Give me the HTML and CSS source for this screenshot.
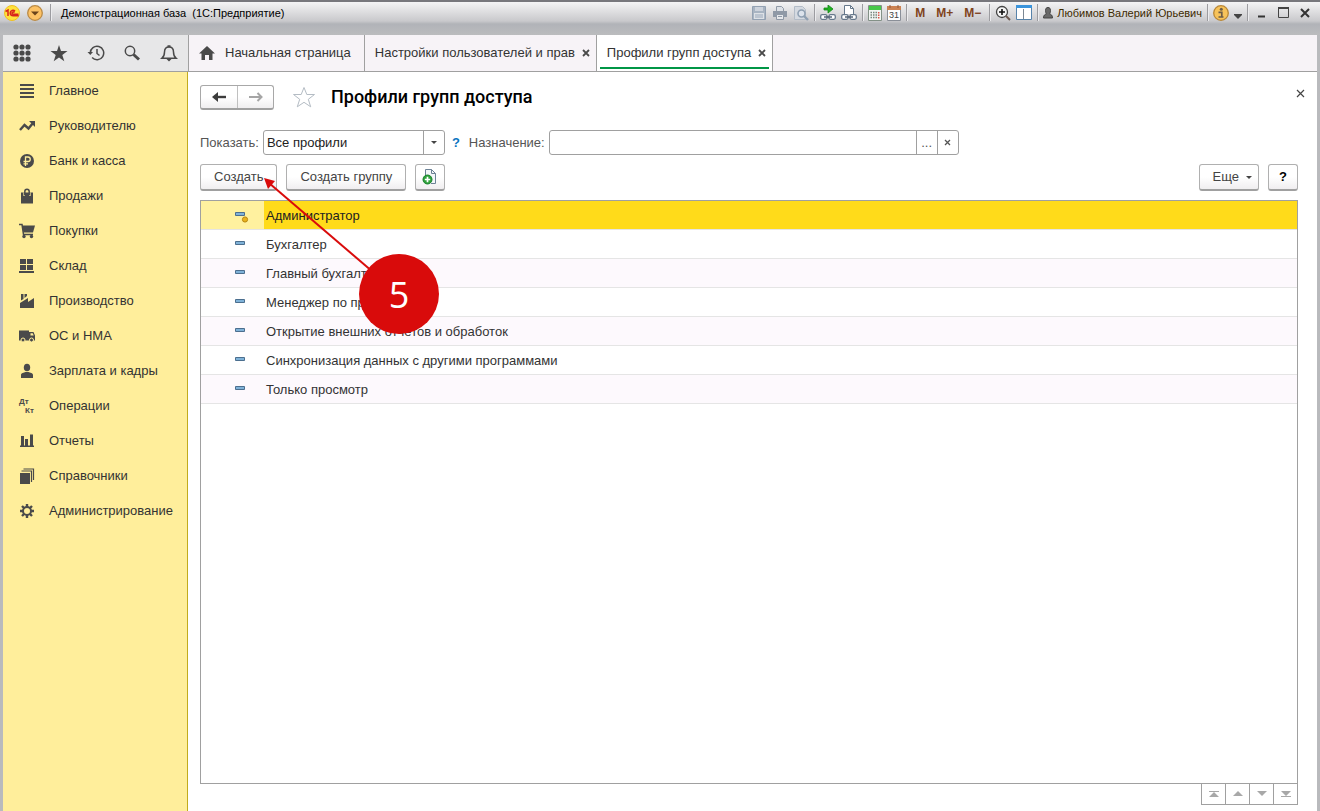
FILE: index.html
```html
<!DOCTYPE html>
<html lang="ru">
<head>
<meta charset="utf-8">
<title>Демонстрационная база (1С:Предприятие)</title>
<link rel="stylesheet" href="styles.css">
</head>
<body>
<div class="window">
  <header class="titlebar">
    <button class="tb-btn logo" aria-label="1С">
      <svg width="16" height="16" viewBox="0 0 16 16"><circle cx="8" cy="8" r="7.500" fill="#ffe23c" stroke="#f0c020"/><path d="M1.500 6.500 4 5v6M11 6.200C9.600 4.600 6.200 5 6.200 8c0 2.500 2 2.700 3 2.700h5.500M10.500 7.500C9.500 6.500 8 7 8 8s.7 1.200 1.500 1.200h5" fill="none" stroke="#d8231c" stroke-width="1.500"/></svg>
    </button>
    <button class="tb-btn menu" aria-label="Главное меню">
      <svg width="16" height="16" viewBox="0 0 16 16"><circle cx="8" cy="8" r="7.300" fill="#fdc265" stroke="#ba8a45" stroke-width="1.300"/><path d="M4 6.500h8L8 10.500z" fill="#6a431b"/></svg>
    </button>
    <span class="sep"></span>
    <span class="app-title">Демонстрационная база&nbsp; (1С:Предприятие)</span>
    <div class="tools">
      <button class="tb-btn" aria-label="Сохранить"><svg width="16" height="16" viewBox="0 0 16 16"><path d="M1.500 1.500h13v13h-13z" fill="#a8b4c2" stroke="#93a1b2"/><path d="M4 2h8v4H4z" fill="#cdd3dc"/><path d="M3 8h10v6H3z" fill="#dde1e6"/><path d="M4 10h8M4 12h8" stroke="#9aa8ba"/></svg></button>
      <button class="tb-btn" aria-label="Печать"><svg width="16" height="16" viewBox="0 0 16 16"><path d="M4.500 6V1.500h5l2 2V6" fill="#dde1e6" stroke="#8f99a6"/><path d="M1 6h14v6H1z" fill="#8f99a6"/><path d="M4.500 9.500h7v5h-7z" fill="#e6e8eb" stroke="#8f99a6"/><path d="M6 11.500h4" stroke="#8f99a6"/></svg></button>
      <button class="tb-btn" aria-label="Предварительный просмотр"><svg width="16" height="16" viewBox="0 0 16 16"><path d="M1.500 1.500h8l3 3v10h-11z" fill="#d5dae1" stroke="#b3bcc7"/><circle cx="8.500" cy="8.500" r="3.500" fill="#dce3ec" stroke="#8fa0b2" stroke-width="1.600"/><path d="m11 11 4 4" stroke="#8fa0b2" stroke-width="2.400"/></svg></button>
      <span class="sep"></span>
      <button class="tb-btn" aria-label="Получить ссылку"><svg width="16" height="16" viewBox="0 0 16 16"><path d="M4 3h4V0l5 4-5 4V5H4z" fill="#20b322" stroke="#128518" stroke-width=".8"/><rect x=".7" y="9.700" width="6.300" height="4.600" rx="1.500" fill="#fff" stroke="#66788b" stroke-width="1.300"/><rect x="9" y="9.700" width="6.300" height="4.600" rx="1.500" fill="#fff" stroke="#66788b" stroke-width="1.300"/><path d="M4 12h8" stroke="#4b5b6e" stroke-width="1.400"/></svg></button>
      <button class="tb-btn" aria-label="Перейти по ссылке"><svg width="16" height="16" viewBox="0 0 16 16"><path d="M3.500 9V.500h6l3 3V9" fill="#fff" stroke="#66788b"/><path d="M9.500.500v3h3" fill="none" stroke="#66788b"/><rect x=".7" y="9.700" width="6.300" height="4.600" rx="1.500" fill="#fff" stroke="#66788b" stroke-width="1.300"/><rect x="9" y="9.700" width="6.300" height="4.600" rx="1.500" fill="#fff" stroke="#66788b" stroke-width="1.300"/><path d="M4 12h8" stroke="#4b5b6e" stroke-width="1.400"/></svg></button>
      <span class="sep"></span>
      <button class="tb-btn" aria-label="Калькулятор"><svg width="14" height="16" viewBox="0 0 14 16"><path d="M.5.500h13v15H.5z" fill="#f2f5f3" stroke="#839187"/><path d="M1 1h12v4H1z" fill="#48c84a"/><path d="M2.500 7.500h7M2.500 10h7M2.500 12.500h7" stroke="#79867e" stroke-width="1.400" stroke-dasharray="1.500 1"/><path d="M10.700 7v7" stroke="#dc5348" stroke-width="1.500" stroke-dasharray="1.500 1"/></svg></button>
      <button class="tb-btn" aria-label="Календарь"><svg width="14" height="16" viewBox="0 0 14 16"><path d="M.5 1.500h13v14H.5z" fill="#fff" stroke="#8a8f98"/><path d="M0 1h14v4H0z" fill="#cc8354"/><path d="M3 0v3M11 0v3" stroke="#90593a"/><text x="7" y="13" text-anchor="middle" class="cal-day">31</text></svg></button>
      <span class="sep"></span>
      <button class="tb-btn mem">M</button>
      <button class="tb-btn mem">M+</button>
      <button class="tb-btn mem">M−</button>
      <span class="sep"></span>
      <button class="tb-btn" aria-label="Масштаб"><svg width="16" height="16" viewBox="0 0 16 16"><circle cx="7" cy="7" r="5.500" fill="#f5f5f5" stroke="#444" stroke-width="1.300"/><path d="M4 7h6M7 4v6" stroke="#111" stroke-width="1.600"/><path d="m11 11 4 4" stroke="#6c5a50" stroke-width="2"/></svg></button>
      <button class="tb-btn" aria-label="Панели"><svg width="16" height="15" viewBox="0 0 16 15"><path d="M.5.500h15v14H.5z" fill="#fff" stroke="#5783aa"/><path d="M0 0h16v3H0z" fill="#3a94dc"/><path d="M7.500 4v10" stroke="#7b8793"/></svg></button>
      <span class="sep"></span>
      <button class="tb-btn user"><svg width="10" height="12" viewBox="0 0 10 12"><path d="M2.500 3.500C2.500 1.500 3.300.5 5 .5s2.500 1 2.500 3S6.800 6.500 6.500 7c1.500.4 3 1 3 4H.5c0-3 1.500-3.600 3-4-.3-.5-1-1.500-1-3.500z" fill="#696969" stroke="#444"/></svg>Любимов Валерий Юрьевич</button>
      <span class="sep"></span>
      <button class="tb-btn" aria-label="Информация"><svg width="16" height="16" viewBox="0 0 16 16"><circle cx="8" cy="8" r="7.300" fill="#f7c35a" stroke="#b98736" stroke-width="1.300"/><circle cx="8.300" cy="4.300" r="1.500" fill="#6d5d48"/><path d="M5.500 7.300h3.300v4.500M5.500 12h5" fill="none" stroke="#6d5d48" stroke-width="1.700"/></svg></button>
      <button class="tb-btn" aria-label="Ещё"><svg class="low" width="8" height="5" viewBox="0 0 8 5"><path d="M0 0h8v1L4 5 0 1z" fill="#444"/></svg></button>
      <span class="sep"></span>
    </div>
    <div class="win-buttons">
      <button class="tb-btn" aria-label="Свернуть"><svg width="12" height="12" viewBox="0 0 12 12"><path d="M3 9.500h7" stroke="#333" stroke-width="2"/></svg></button>
      <button class="tb-btn" aria-label="Развернуть"><svg width="11" height="11" viewBox="0 0 11 11"><path d="M.5.500h10v10H.5z" fill="none" stroke="#444"/><path d="M0 1h11" stroke="#444" stroke-width="2"/></svg></button>
      <button class="tb-btn" aria-label="Закрыть"><svg width="10" height="10" viewBox="0 0 10 10"><path d="m1 1 8 8M9 1 1 9" stroke="#333" stroke-width="2"/></svg></button>
    </div>
  </header>

  <div class="client">
    <div class="topbar">
      <div class="quick">
        <button class="icon-btn" aria-label="Все функции"><svg width="18" height="18" viewBox="0 0 18 18" fill="#4a4a4a"><circle cx="3" cy="3" r="2.600"/><circle cx="9" cy="3" r="2.600"/><circle cx="15" cy="3" r="2.600"/><circle cx="3" cy="9" r="2.600"/><circle cx="9" cy="9" r="2.600"/><circle cx="15" cy="9" r="2.600"/><circle cx="3" cy="15" r="2.600"/><circle cx="9" cy="15" r="2.600"/><circle cx="15" cy="15" r="2.600"/></svg></button>
        <button class="icon-btn" aria-label="Избранное"><svg width="18" height="18" viewBox="0 0 18 18"><path d="m9 1 2 6h6.500l-5.200 4 2 6.200L9 13.400l-5.300 3.800 2-6.200L.5 7H7z" fill="#4a4a4a"/></svg></button>
        <button class="icon-btn" aria-label="История"><svg width="18" height="18" viewBox="0 0 18 18" fill="none" stroke="#4a4a4a" stroke-width="1.500"><path d="M3.300 9a6.700 6.700 0 1 1 1.800 4.600M10 5v4.500l2.500 2"/><path d="m.5 8 2.800 3L6 8z" fill="#4a4a4a" stroke="none"/></svg></button>
        <button class="icon-btn" aria-label="Поиск"><svg width="18" height="18" viewBox="0 0 18 18" fill="none" stroke="#4a4a4a"><circle cx="7" cy="7" r="4.700" stroke-width="1.500"/><path d="m10.500 10.500 5.500 5" stroke-width="3"/></svg></button>
        <button class="icon-btn" aria-label="Оповещения"><svg width="18" height="18" viewBox="0 0 18 18"><path d="M2 14.200c1.800-1.500 2.500-3 2.500-6.200 0-3 1.500-5 4.500-5s4.500 2 4.500 5c0 3.200.7 4.700 2.500 6.200z" fill="none" stroke="#4a4a4a" stroke-width="1.500"/><path d="M7.500 1.200h3v2h-3zM6.500 15h5L9 17.500z" fill="#4a4a4a"/></svg></button>
      </div>
      <nav class="tabs">
        <a class="tab home" href="#"><svg width="16" height="14" viewBox="0 0 16 14"><path d="M8 0 0 7.500h2.500V14H6V9h4v5h3.500V7.500H16z" fill="#4a4a4a"/></svg>Начальная страница</a>
        <a class="tab" href="#">Настройки пользователей и прав<svg class="x" width="8" height="8" viewBox="0 0 8 8"><path d="m1 1 6 6M7 1 1 7" stroke="#4a4a4a" stroke-width="1.800"/></svg></a>
        <a class="tab active" href="#">Профили групп доступа<svg class="x" width="8" height="8" viewBox="0 0 8 8"><path d="m1 1 6 6M7 1 1 7" stroke="#4a4a4a" stroke-width="1.800"/></svg></a>
      </nav>
    </div>

    <div class="body">
      <nav class="sections">
        <a href="#"><svg width="16" height="16" viewBox="0 0 16 16"><path d="M1 2h14M1 6h14M1 10h14M1 14h14" stroke="#4a4a4a" stroke-width="2"/></svg>Главное</a>
        <a href="#"><svg width="16" height="16" viewBox="0 0 16 16"><path d="m1 12 4.500-5 4 3.500L14 5" fill="none" stroke="#4a4a4a" stroke-width="2.400"/><path d="M10 3h6v6z" fill="#4a4a4a"/></svg>Руководителю</a>
        <a href="#"><svg width="16" height="16" viewBox="0 0 16 16"><circle cx="8" cy="8" r="7" fill="#4a4a4a"/><path d="M6.500 13V4H9c3 0 3 4.500 0 4.500H4.500M4.500 10.800H9" fill="none" stroke="#ffee9b" stroke-width="1.300"/></svg>Банк и касса</a>
        <a href="#"><svg width="16" height="16" viewBox="0 0 16 16"><path d="M2 4.500h12v11H2z" fill="#4a4a4a"/><path d="M5 8V4.500M11 8V4.500" fill="none" stroke="#ffee9b" stroke-width="1.200"/><path d="M5.800 7V3.500C5.800.5 10.200.5 10.200 3.500V7" fill="none" stroke="#4a4a4a" stroke-width="1.500"/></svg>Продажи</a>
        <a href="#"><svg width="16" height="16" viewBox="0 0 16 16"><path d="M0 1.500h3l1.500 10H14" fill="none" stroke="#4a4a4a" stroke-width="1.500"/><path d="M3 2.500h13L14 9.500H4.300z" fill="#4a4a4a"/><circle cx="5" cy="13.500" r="1.700" fill="#4a4a4a"/><circle cx="12.500" cy="13.500" r="1.700" fill="#4a4a4a"/></svg>Покупки</a>
        <a href="#"><svg width="16" height="16" viewBox="0 0 16 16"><path d="M1 1h6v5H1zM8 1h6v5H8zM1 7h6v5H1zM8 7h6v5H8zM0 13h15v2H0z" fill="#4a4a4a"/></svg>Склад</a>
        <a href="#"><svg width="16" height="16" viewBox="0 0 16 16"><path d="M1 15V10L9 5v4l6-4v10zM2 1h2.500v5L2 7.500zM5.500 1H8v2L5.500 5z" fill="#4a4a4a"/></svg>Производство</a>
        <a href="#"><svg width="16" height="16" viewBox="0 0 16 16"><path d="M0 2.500h10v10H0zM10 4h4.500L16 7.500v5h-6z" fill="#4a4a4a"/><path d="M11.500 5.300h2.200l1 2.200h-3.200z" fill="#ffee9b"/><circle cx="4" cy="12" r="2" fill="#4a4a4a" stroke="#ffee9b"/><circle cx="12.500" cy="12" r="2" fill="#4a4a4a" stroke="#ffee9b"/></svg>ОС и НМА</a>
        <a href="#"><svg width="16" height="16" viewBox="0 0 16 16"><ellipse cx="8" cy="4.500" rx="3.200" ry="3.800" fill="#4a4a4a"/><path d="M2 15v-3c0-2 3-2.500 4.500-3h3c1.500.5 4.500 1 4.500 3v3z" fill="#4a4a4a"/></svg>Зарплата и кадры</a>
        <a href="#"><svg class="dtkt" width="16" height="16" viewBox="0 0 16 16"><text x="0" y="6">Дт</text><text x="6" y="15">Кт</text></svg>Операции</a>
        <a href="#"><svg width="16" height="16" viewBox="0 0 16 16"><path d="M2 3h3v10H2zM6 6h3v7H6zM11 1.500h3V13h-3zM1 12.500h14V14H1z" fill="#4a4a4a"/></svg>Отчеты</a>
        <a href="#"><svg width="16" height="16" viewBox="0 0 16 16"><path d="M1 5h10v11H1z" fill="#4a4a4a"/><path d="M2.500 3h10v11M4.500 1h10v11" fill="none" stroke="#4a4a4a" stroke-width="1.200"/></svg>Справочники</a>
        <a href="#"><svg width="16" height="16" viewBox="0 0 16 16"><circle cx="8" cy="8" r="4" fill="none" stroke="#4a4a4a" stroke-width="2"/><path d="M8 1v3M8 12v3M1 8h3M12 8h3M3 3l2 2M11 11l2 2M13 3l-2 2M3 13l2-2" stroke="#4a4a4a" stroke-width="2.400"/></svg>Администрирование</a>
      </nav>

      <main class="page">
        <div class="heading">
          <div class="history">
            <button aria-label="Назад"><svg width="14" height="10" viewBox="0 0 14 10"><path d="M3 5h11" stroke="#3c3c3c" stroke-width="2.400"/><path d="M6 0v10L0 5z" fill="#3c3c3c"/></svg></button>
            <button aria-label="Вперед"><svg width="14" height="10" viewBox="0 0 14 10"><path d="M0 5h12" stroke="#a5a5a5" stroke-width="2"/><path d="m8.500 1 4 4-4 4" fill="none" stroke="#a5a5a5" stroke-width="2"/></svg></button>
          </div>
          <button class="fav" aria-label="В избранное"><svg width="24" height="22" viewBox="0 0 24 22"><path d="m12 1.500 2.800 7H22.500l-6.200 4.800 2.400 7.500L12 16.300l-6.700 4.500 2.400-7.500L1.500 8.500h7.700z" fill="none" stroke="#b4bcc4"/></svg></button>
          <h1>Профили групп доступа</h1>
          <button class="close" aria-label="Закрыть"><svg width="9" height="9" viewBox="0 0 9 9"><path d="m1 1 7 7M8 1 1 8" stroke="#444" stroke-width="1.200"/></svg></button>
        </div>

        <div class="filters">
          <label for="show">Показать:</label>
          <div class="combo">
            <select id="show"><option>Все профили</option></select>
            <span class="combo-arrow"><svg width="6" height="3" viewBox="0 0 6 3"><path d="M0 0h6L3 3z" fill="#444"/></svg></span>
          </div>
          <button class="hint">?</button>
          <label for="purpose">Назначение:</label>
          <div class="picker">
            <input id="purpose" type="text">
            <button>...</button>
            <button aria-label="Очистить"><svg width="7" height="7" viewBox="0 0 7 7"><path d="m1 1 5 5M6 1 1 6" stroke="#555" stroke-width="1.300"/></svg></button>
          </div>
        </div>

        <div class="commands">
          <button class="cmd">Создать</button>
          <button class="cmd">Создать группу</button>
          <button class="cmd square" aria-label="Создать копированием"><svg width="16" height="16" viewBox="0 0 16 16"><path d="M3.500 7V.500h6l4 4v10H9" fill="#f4f7fa" stroke="#6d8296"/><path d="M9.500.500v4h4" fill="none" stroke="#6d8296"/><circle cx="5.500" cy="10.500" r="4.500" fill="#2da13a" stroke="#17802a"/><path d="M2.800 10.500h5.400M5.500 7.800v5.400" stroke="#fff" stroke-width="1.700"/></svg></button>
          <button class="cmd more">Еще<svg width="6" height="3" viewBox="0 0 6 3"><path d="M0 0h6L3 3z" fill="#444"/></svg></button>
          <button class="cmd square help">?</button>
        </div>

        <div class="list">
          <table>
            <tbody>
              <tr class="selected"><td><svg width="16" height="14" viewBox="0 0 16 14"><path d="M.5 3.500h9v3h-9z" fill="#7fb2d8" stroke="#4c6f8f"/><circle cx="10" cy="10.500" r="2.600" fill="#e9b21c" stroke="#b98711"/></svg></td><td>Администратор</td></tr>
              <tr><td><svg width="16" height="14" viewBox="0 0 16 14"><path d="M.5 3.500h9v3h-9z" fill="#7fb2d8" stroke="#4c6f8f"/></svg></td><td>Бухгалтер</td></tr>
              <tr><td><svg width="16" height="14" viewBox="0 0 16 14"><path d="M.5 3.500h9v3h-9z" fill="#7fb2d8" stroke="#4c6f8f"/></svg></td><td>Главный бухгалтер</td></tr>
              <tr><td><svg width="16" height="14" viewBox="0 0 16 14"><path d="M.5 3.500h9v3h-9z" fill="#7fb2d8" stroke="#4c6f8f"/></svg></td><td>Менеджер по продажам</td></tr>
              <tr><td><svg width="16" height="14" viewBox="0 0 16 14"><path d="M.5 3.500h9v3h-9z" fill="#7fb2d8" stroke="#4c6f8f"/></svg></td><td>Открытие внешних отчетов и обработок</td></tr>
              <tr><td><svg width="16" height="14" viewBox="0 0 16 14"><path d="M.5 3.500h9v3h-9z" fill="#7fb2d8" stroke="#4c6f8f"/></svg></td><td>Синхронизация данных с другими программами</td></tr>
              <tr><td><svg width="16" height="14" viewBox="0 0 16 14"><path d="M.5 3.500h9v3h-9z" fill="#7fb2d8" stroke="#4c6f8f"/></svg></td><td>Только просмотр</td></tr>
            </tbody>
          </table>
        </div>
        <div class="pager">
          <button aria-label="В начало"><svg width="10" height="6" viewBox="0 0 10 6"><path d="M0 0h10v1H0zM5 1l5 5H0z" fill="#a8a8a8"/></svg></button>
          <button aria-label="Вверх"><svg width="10" height="6" viewBox="0 0 10 6"><path d="m5 0 5 5H0z" fill="#a8a8a8"/></svg></button>
          <button aria-label="Вниз"><svg width="10" height="6" viewBox="0 0 10 6"><path d="M0 0h10L5 5z" fill="#a8a8a8"/></svg></button>
          <button aria-label="В конец"><svg width="10" height="6" viewBox="0 0 10 6"><path d="M0 5h10v1H0zM0 0h10L5 5z" fill="#a8a8a8"/></svg></button>
        </div>
      </main>
    </div>
  </div>
</div>
<svg class="callout" width="180" height="164" viewBox="0 0 180 164">
  <path d="M9 7 120 102" stroke="#d90b0b" stroke-width="2"/>
  <path d="m4 2 11 3-7 8z" fill="#d90b0b"/>
  <circle cx="139" cy="118" r="40" fill="#d90b0b"/>
  <text x="139" y="132" text-anchor="middle">5</text>
</svg>
</body>
</html>
```
FILE: styles.css
```css
* { box-sizing: border-box; }
body {
  margin: 0;
  font: 13px/16px "Liberation Sans", Arial, sans-serif;
  color: #333;
}
button, input, select { font: inherit; color: inherit; }
button { padding: 0; border: 0; background: none; }
a { color: inherit; text-decoration: none; }
svg { display: block; flex: none; }

.window {
  display: flex;
  flex-direction: column;
  height: 100vh;
  padding: 0 3px;
  background: #b9babd;
}

.titlebar {
  display: flex;
  align-items: center;
  height: 35px;
  flex: none;
  margin: 0 -3px;
  padding: 0 10px 12px 4px;
  border-top: 2px solid #77777c;
  background: linear-gradient(#f4f4f5, #d9d9db 12px, #c9c9cc 19px, #b1b3b8 22px, #bbbcbe);
  font: 11px/14px "Liberation Sans", sans-serif;
  color: #000;
}
.tb-btn { display: flex; align-items: center; justify-content: center; }
.menu { margin: 0 7px; }
.sep { width: 1px; height: 17px; background: #9c9ca0; box-shadow: 1px 0 #ececee; }
.app-title { margin-left: 10px; }
.tools { display: flex; align-items: center; gap: 5px; margin-left: auto; }
.cal-day { font: 9px "Liberation Sans", sans-serif; fill: #444; }
.mem { padding: 0 3px; font: bold 12px/14px "Liberation Sans", sans-serif; color: #80431c; }
.user { gap: 4px; color: #3d2a00; }
.low { margin-top: 8px; }
.win-buttons { display: flex; align-items: center; gap: 11px; margin-left: 7px; }

.client { display: flex; flex-direction: column; flex: 1; min-height: 0; background: #fff; }
.topbar { display: flex; height: 37px; flex: none; border-bottom: 1px solid #a0a0a0; background: #f7f3f7; }
.quick {
  display: flex;
  align-items: center;
  justify-content: space-between;
  width: 186px;
  padding: 0 10px;
  border-right: 1px solid #a0a0a0;
  background: #e7e7e8;
}
.tabs { display: flex; }
.tab {
  display: flex;
  align-items: center;
  gap: 7px;
  padding: 0 6px 0 10px;
  border-right: 1px solid #a0a0a0;
}
.tab.home { gap: 10px; padding-right: 13px; }
.tab.active { position: relative; background: #fff; }
.tab.active::after {
  content: "";
  position: absolute;
  inset: auto 3px 2px;
  height: 2px;
  background: #009646;
}

.body { display: flex; flex: 1; min-height: 0; }
.sections { width: 185px; flex: none; padding-top: 1px; border-right: 1px solid #c2ab1e; background: #ffee9b; }
.sections a { display: flex; align-items: center; gap: 14px; height: 35px; padding-left: 16px; }
.dtkt { overflow: visible; }
.dtkt text { font: bold 8px "Liberation Sans", sans-serif; fill: #4a4a4a; }

.page { display: flex; flex-direction: column; flex: 1; min-width: 0; padding: 12px 19px 6px 12px; }
.heading { display: flex; align-items: center; height: 26px; }
.history { display: flex; border: 1px solid #a8a8a8; border-bottom: 2px solid #a0a0a0; border-radius: 3px; background: linear-gradient(#fff 50%, #f0eef0); }
.history button { display: grid; place-items: center; width: 36px; height: 22px; }
.history button + button { border-left: 1px solid #c0c0c0; }
.fav { margin: 0 15px 0 18px; }
h1 { margin: 0; font: 500 18px/24px Roboto, sans-serif; color: #000; }
.close { display: grid; place-items: center; width: 17px; height: 17px; margin: 0 -11px 8px auto; }

.filters { display: flex; align-items: center; margin-top: 20px; color: #555; }
.combo { position: relative; width: 182px; height: 25px; margin: 0 7px 0 4px; }
.combo select {
  width: 100%;
  height: 100%;
  padding: 0 24px 0 3px;
  border: 1px solid #a0a0a0;
  border-radius: 3px;
  background: #fff;
  color: #222;
  appearance: none;
}
.combo-arrow {
  position: absolute;
  inset: 1px 1px 1px auto;
  display: grid;
  place-items: center;
  width: 21px;
  border-left: 1px solid #a0a0a0;
  pointer-events: none;
}
.hint { margin-right: 9px; font-weight: 700; color: #0a74c0; }
.picker { display: flex; width: 410px; height: 25px; margin-left: 4px; border: 1px solid #a0a0a0; border-radius: 3px; }
.picker input { flex: 1; min-width: 0; padding: 0 3px; border: 0; background: none; }
.picker button { display: grid; place-items: center; width: 21px; border-left: 1px solid #a0a0a0; }

.commands { display: flex; gap: 9px; margin-top: 9px; }
.cmd {
  display: flex;
  align-items: center;
  justify-content: center;
  height: 27px;
  padding: 0 13px;
  border: 1px solid #b0b0b0;
  border-bottom: 2px solid #a0a0a0;
  border-radius: 3px;
  background: linear-gradient(#fff 50%, #f0eef0);
  color: #444;
}
.square { width: 30px; padding: 0; }
.more { gap: 7px; margin-left: auto; padding: 0 6px 0 13px; }
.help { font-weight: 700; color: #000; }

.list { flex: 1; min-height: 0; margin-top: 9px; border: 1px solid #a0a0a0; }
table { width: 100%; border-spacing: 0; }
td { height: 29px; padding: 2px 2px 0; border-bottom: 1px solid #e5e5e5; }
td:first-child { width: 63px; padding-left: 34px; }
tr:nth-child(odd) { background: #fdf9fd; }
.selected td { background: #ffdb1a; color: #222; }
.selected td:first-child { background: #fff19f; }
.pager { display: flex; align-self: flex-end; border: solid #a0a0a0; border-width: 0 1px 1px 0; }
.pager button { display: grid; place-items: center; width: 24px; height: 20px; border-left: 1px solid #a0a0a0; }

.callout { position: absolute; left: 260px; top: 176px; pointer-events: none; }
.callout text { font: 36px "Open Sans", sans-serif; fill: #fff; }
```
